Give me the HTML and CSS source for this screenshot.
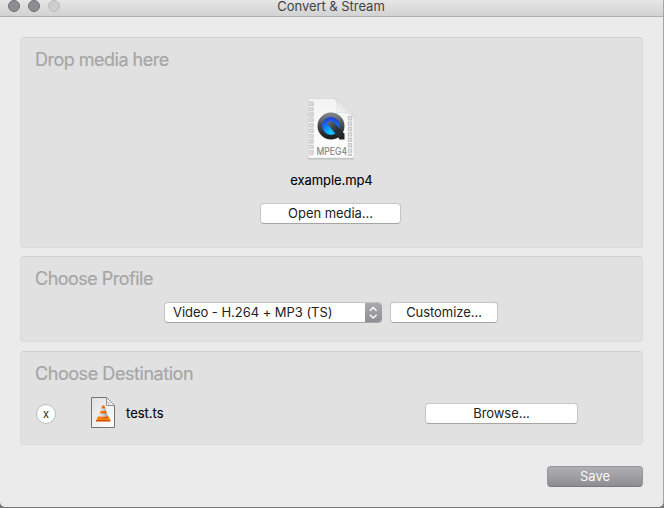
FILE: index.html
```html
<!DOCTYPE html>
<html lang="en">
<head>
<meta charset="utf-8">
<title>Convert &amp; Stream</title>
<link rel="stylesheet" href="styles.css">
</head>
<body>
<div class="window">
  <header class="titlebar">
    <div class="lights"><span class="light"></span><span class="light"></span><span class="light off"></span></div>
    <h1 class="title">Convert &amp; Stream</h1>
  </header>
  <main class="content">
    <section class="panel media">
      <h2 class="heading">Drop media here</h2>
      <div class="media-body">
        <svg class="movie" width="48" height="64" viewBox="0 0 48 64">
          <defs>
            <linearGradient id="page" x1="0" y1="0" x2="0" y2="1"><stop offset="0" stop-color="#f3f3f3"/><stop offset="1" stop-color="#fff"/></linearGradient>
            <linearGradient id="ring" x1="0" y1="0" x2="0" y2="1"><stop offset="0" stop-color="#7b8086"/><stop offset=".5" stop-color="#42474c"/><stop offset="1" stop-color="#1d2023"/></linearGradient>
            <linearGradient id="tail" x1="0" y1="0" x2="1" y2="1"><stop offset="0" stop-color="#62707c"/><stop offset=".5" stop-color="#2c3238"/><stop offset="1" stop-color="#1d2023"/></linearGradient>
            <radialGradient id="blue" cx=".5" cy=".8" r=".65"><stop offset="0" stop-color="#16d0ff"/><stop offset=".5" stop-color="#0b86fb"/><stop offset="1" stop-color="#2140e0"/></radialGradient>
            <linearGradient id="fold" x1="0" y1="1" x2="1" y2="0"><stop offset="0" stop-color="#fff"/><stop offset=".5" stop-color="#e6e6e6"/><stop offset="1" stop-color="#fafafa"/></linearGradient>
          </defs>
          <path d="M1 2h27l19 18v41.500H1z" fill="#999" opacity=".45"/>
          <path d="M1.300 .5H27q3 0 6 3l11 11q3 3 3 6v39.500H1.300z" fill="url(#page)" stroke="#d0d0d0" stroke-width=".6"/>
          <path d="M4.500 3.500v54.500M43 18v40" stroke="#c6c6c6" stroke-width="4.400" stroke-dasharray="4.400 1"/>
          <path d="M4.500 4.700v52.500M43 19.200v38" stroke="#e4e4e4" stroke-width="2.200" stroke-dasharray="2 3.400"/>
          <path d="M27.500 .7c4 3 3 10 2 14 6-1 13.500 0 17.500 5l-1-3L32 3z" fill="url(#fold)" stroke="#cfcfcf" stroke-width=".5"/>
          <circle cx="24" cy="28" r="11.200" fill="url(#blue)" stroke="url(#ring)" stroke-width="4.600"/>
          <path d="M20.500 26q0-3 3-3 2 0 4 1.800l8.500 9.700 1.500 1v6h-5l-1.500-2.500z" fill="url(#tail)"/>
          <text x="9.500" y="56.500" textLength="30.500" lengthAdjust="spacingAndGlyphs" class="movie-label">MPEG4</text>
        </svg>
        <div class="filename">example.mp4</div>
        <button class="button open"><span>Open media...</span></button>
      </div>
    </section>
    <section class="panel profile">
      <h2 class="heading">Choose Profile</h2>
      <div class="profile-row">
        <div class="select"><span class="value">Video - H.264 + MP3 (TS)</span>
          <span class="stepper"><svg width="17" height="20" viewBox="0 0 17 20"><path d="M4.800 7.700l3.400-3.200 3.400 3.200M4.800 11.800l3.400 3.200 3.400-3.200" fill="none" stroke="#fff" stroke-width="1.400"/></svg></span>
        </div>
        <button class="button customize"><span>Customize...</span></button>
      </div>
    </section>
    <section class="panel destination">
      <h2 class="heading dest">Choose Destination</h2>
      <div class="dest-row">
        <button class="remove">x</button>
        <svg class="doc" width="26" height="32" viewBox="0 0 26 32">
          <defs>
            <linearGradient id="paper" x1="0" y1="0" x2="1" y2="1"><stop offset="0" stop-color="#e0e0e0"/><stop offset="1" stop-color="#fff"/></linearGradient>
            <linearGradient id="cone" x1="0" y1="0" x2="1" y2="0"><stop offset="0" stop-color="#ff8a1e"/><stop offset="1" stop-color="#dc4e00"/></linearGradient>
            <linearGradient id="band" x1="0" y1="0" x2="1" y2="0"><stop offset="0" stop-color="#f4f4f4"/><stop offset="1" stop-color="#9fa2a8"/></linearGradient>
          </defs>
          <path d="M1.500 .5h15l8 8v22h-23z" fill="url(#paper)" stroke="#747474" stroke-width="1"/>
          <path d="M16.500 .5v8h8z" fill="#fff" stroke="#888" stroke-width=".9"/>
          <path d="M17.500 7.500V3.500l4 4z" fill="#c9c9c9"/>
          <path d="M7.700 19.500h11.200l1.400 4H6.300z" fill="#f9820d"/>
          <path d="M6 23h14.400v1.500H6z" fill="#d44a00"/>
          <path d="M12.200 8.500h2.200l3.700 12.300q-4.700 2-9.600 0z" fill="url(#cone)"/>
          <path d="M11.500 11.200h3.600l.9 2.800h-5.400zM9.700 16.500h7.200l.8 2.500q-4.500 1.700-8.800 0z" fill="url(#band)"/>
        </svg>
        <span class="target">test.ts</span>
        <button class="button browse"><span>Browse...</span></button>
      </div>
    </section>
    <footer class="footer"><button class="button save"><span>Save</span></button></footer>
  </main>
</div>
</body>
</html>
```
FILE: styles.css
```css
* { box-sizing: border-box; }
body { margin: 0; background: #777; font: 13px/16px Inter, "Liberation Sans", sans-serif; color: #000; }
button { font: inherit; padding: 0; margin: 0; }
.window { height: 507px; width: 664px; overflow: hidden; background: #ebebeb; border-right: 1px solid #a5a5a5; border-radius: 0 0 5px 5px; }
.titlebar { height: 17px; display: grid; grid-template-columns: 1fr auto 1fr; background: linear-gradient(#e6e6e6, #d2d2d2); border-bottom: 1px solid #b0b0b0; }
.lights { display: flex; gap: 8px; padding-left: 8px; }
.light { width: 12px; height: 12px; border-radius: 50%; background: #8e8d92; border: 1px solid #737277; }
.light.off { background: #cecece; border-color: #bbb; }
.title { margin: 0 1px 0 0; font-size: 13px; line-height: 13px; font-weight: 400; color: #444; letter-spacing: -.04px; }
.content { padding: 20px 20px 0; }
.panel { width: 623px; background: #e1e1e1; border: 1px solid #dadada; border-top-color: #d0d0d0; border-radius: 4px; padding: 11px 14px 0; }
.media { height: 211px; }
.profile { height: 86px; margin-top: 8px; }
.destination { height: 94px; margin-top: 9px; }
.heading { margin: 0; font-size: 18px; font-weight: 400; line-height: 22px; color: #a6a6a6; letter-spacing: -.51px; -webkit-text-stroke: .2px #a6a6a6; }
.heading.dest { letter-spacing: -.44px; }
.media-body { display: flex; flex-direction: column; align-items: center; margin: 27px 0 0; }
.movie { display: block; margin-right: 2px; }
.movie-label { font: 10px Inter, sans-serif; fill: #858585; stroke: #858585; stroke-width: .2px; }
.filename { margin-top: 10px; letter-spacing: -.08px; }
.filename, .target { -webkit-text-stroke: .1px #000; }
.button { height: 21px; background: #fff; border: 1px solid #c5c5c5; border-bottom-color: #a6a6a6; border-radius: 4px; line-height: 19px; color: #222; text-align: center; letter-spacing: -.05px; }
.open { width: 141px; margin-top: 15px; margin-right: 2px; }
.profile-row { display: flex; gap: 8px; margin: 12px 0 0 129px; }
.select { width: 218px; height: 21px; display: flex; justify-content: space-between; border: 1px solid #c3c3c3; border-right: 0; border-bottom-color: #a6a6a6; border-radius: 4px; background: #fff; overflow: hidden; line-height: 19px; color: #222; }
.value { padding-left: 8px; white-space: nowrap; letter-spacing: -.04px; }
.stepper { width: 17px; height: 20px; background: linear-gradient(#aaa9ae, #8e8d93); }
.stepper svg { display: block; }
.customize { width: 108px; }
.dest-row { display: flex; align-items: center; height: 34px; margin-top: 11px; }
.remove { width: 20px; height: 20px; margin: 2px 34px 0 1px; border-radius: 50%; background: #fff; border: 1px solid #bdbdbd; font-size: 11px; line-height: 17px; color: #222; }
.doc { margin-top: -1px; }
.target { margin-left: 10px; width: 299px; }
.browse { width: 153px; margin-top: 1px; }
.footer { display: flex; justify-content: flex-end; margin-top: 21px; }
.save { width: 96px; color: #f7f7f7; border-color: #97969b; border-bottom-color: #79787d; background: linear-gradient(#b0afb3, #8e8d92); }
```
